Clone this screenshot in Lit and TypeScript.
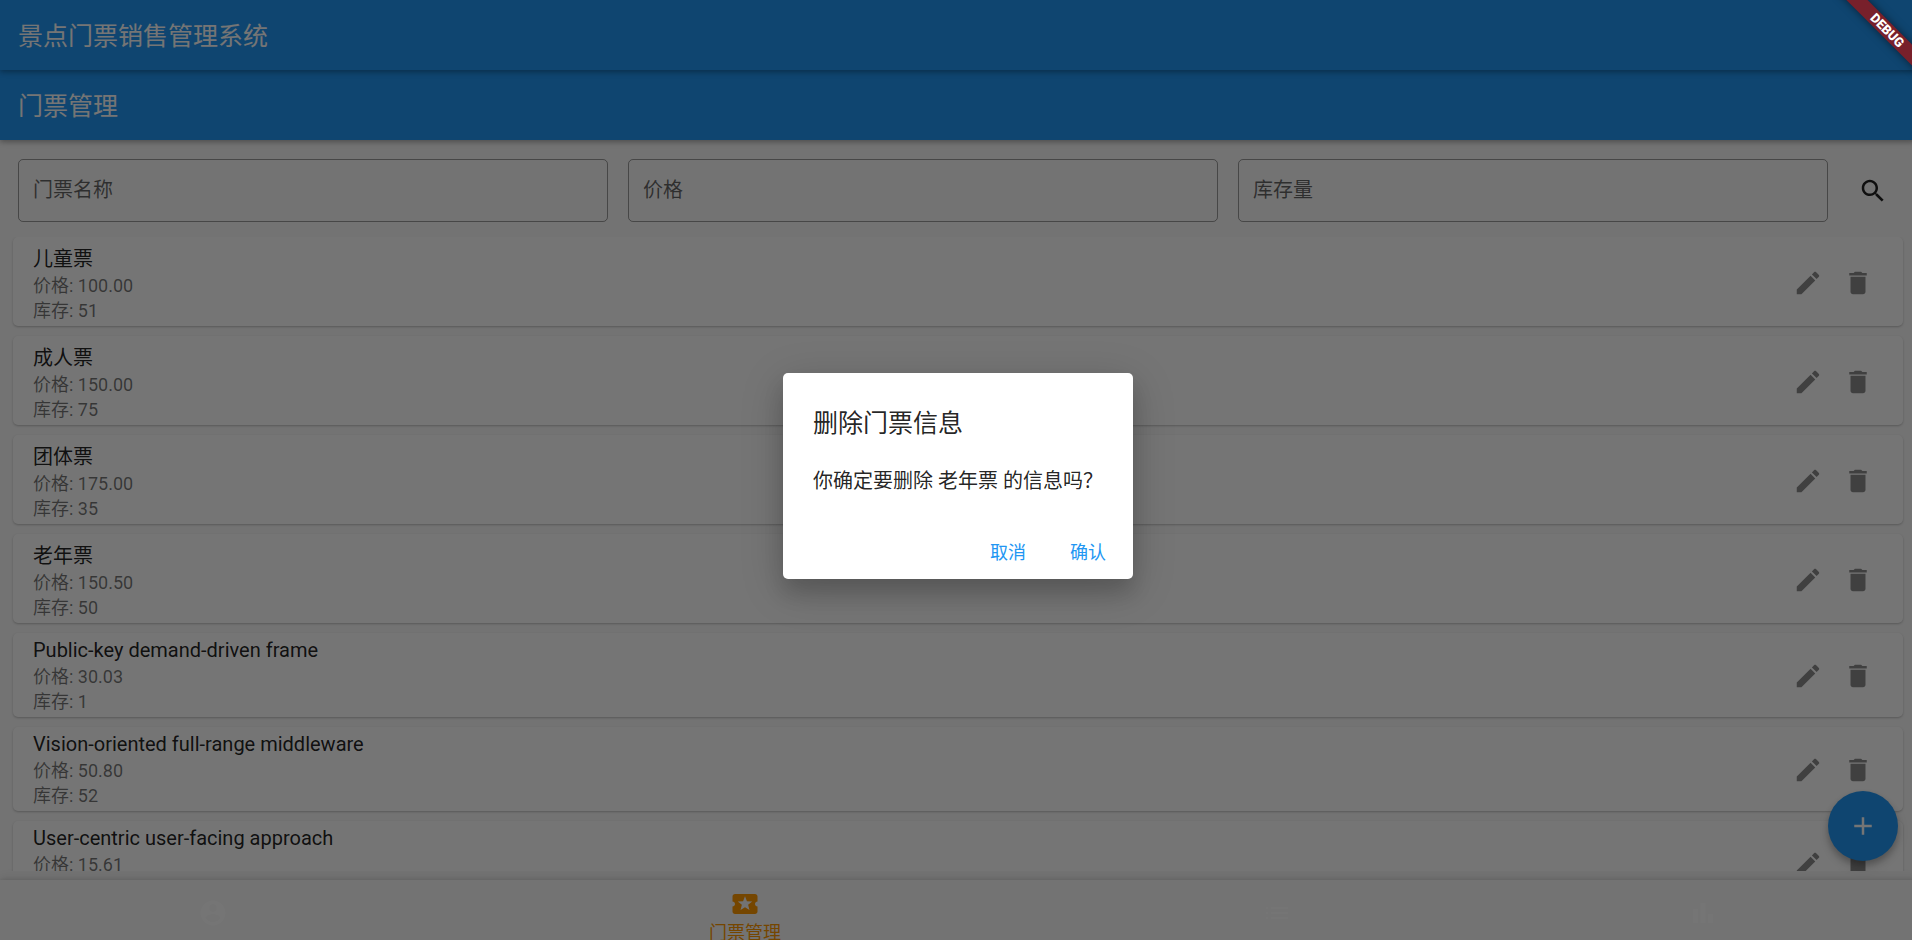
import { LitElement, html, css, svg } from "lit";
import { customElement, state } from "lit/decorators.js";

interface Ticket {
  name: string;
  price: string;
  stock: number;
}

const TICKETS: Ticket[] = [
  { name: "儿童票", price: "100.00", stock: 51 },
  { name: "成人票", price: "150.00", stock: 75 },
  { name: "团体票", price: "175.00", stock: 35 },
  { name: "老年票", price: "150.50", stock: 50 },
  { name: "Public-key demand-driven frame", price: "30.03", stock: 1 },
  { name: "Vision-oriented full-range middleware", price: "50.80", stock: 52 },
  { name: "User-centric user-facing approach", price: "15.61", stock: 24 },
];

const FILTERS = [
  { id: "name", label: "门票名称" },
  { id: "price", label: "价格" },
  { id: "stock", label: "库存量" },
];

const PATHS = {
  search:
    "M15.5 14h-.79l-.28-.27C15.41 12.59 16 11.11 16 9.5 16 5.91 13.09 3 9.5 3S3 5.91 3 9.5 5.91 16 9.5 16c1.61 0 3.09-.59 4.23-1.57l.27.28v.79l5 4.99L20.49 19l-4.99-5zm-6 0C7.01 14 5 11.99 5 9.5S7.01 5 9.5 5 14 7.01 14 9.5 11.99 14 9.5 14z",
  edit: "M3 17.25V21h3.75L17.81 9.94l-3.75-3.75L3 17.25zM20.71 7.04c.39-.39.39-1.02 0-1.41l-2.34-2.34c-.39-.39-1.02-.39-1.41 0l-1.83 1.83 3.75 3.75 1.83-1.83z",
  trash: "M6 19c0 1.1.9 2 2 2h8c1.1 0 2-.9 2-2V7H6v12zM19 4h-3.5l-1-1h-5l-1 1H5v2h14V4z",
  add: "M19 13h-6v6h-2v-6H5v-2h6V5h2v6h6v2z",
  account:
    "M12 2C6.48 2 2 6.48 2 12s4.48 10 10 10 10-4.48 10-10S17.52 2 12 2zm0 3c1.66 0 3 1.34 3 3s-1.34 3-3 3-3-1.34-3-3 1.34-3 3-3zm0 14.2c-2.5 0-4.71-1.28-6-3.22.03-1.99 4-3.08 6-3.08 1.99 0 5.97 1.09 6 3.08-1.29 1.94-3.5 3.22-6 3.22z",
  ticket:
    "M20 12c0-1.1.9-2 2-2V6c0-1.1-.9-2-2-2H4c-1.1 0-1.99.9-1.99 2v4c1.1 0 1.99.9 1.99 2s-.89 2-2 2v4c0 1.1.9 2 2 2h16c1.1 0 2-.9 2-2v-4c-1.1 0-2-.9-2-2zm-4.42 4.8L12 14.5l-3.58 2.3 1.08-4.12-3.29-2.69 4.24-.25L12 5.8l1.54 3.95 4.24.25-3.29 2.69 1.09 4.11z",
  list: "M3 13h2v-2H3v2zm0 4h2v-2H3v2zm0-8h2V7H3v2zm4 4h14v-2H7v2zm0 4h14v-2H7v2zM7 7v2h14V7H7z",
  chart: "M4 9h4v11H4zM10 4h4v16h-4zM16 13h4v7h-4z",
};

const icon = (name: keyof typeof PATHS) =>
  html`<svg class="icon" viewBox="0 0 24 24" aria-hidden="true">${svg`<path d=${PATHS[name]}></path>`}</svg>`;

const base = css`
  * {
    box-sizing: border-box;
  }
  button {
    border: 0;
    padding: 0;
    background: none;
    font: inherit;
    color: inherit;
    cursor: pointer;
  }
  .icon {
    display: block;
    width: 30px;
    height: 30px;
    fill: currentColor;
  }
`;

@customElement("ticket-card")
export class TicketCard extends LitElement {
  static properties = { ticket: { attribute: false } };
  declare ticket: Ticket;

  static styles = [
    base,
    css`
      :host {
        display: block;
      }
      .card {
        display: flex;
        align-items: center;
        padding: 5px 20px 3px;
        background: #fff;
        border-radius: 5px;
        box-shadow: 0 1px 2px rgba(0, 0, 0, 0.16), 0 1px 3px rgba(0, 0, 0, 0.08);
      }
      .body {
        flex: 1;
        min-width: 0;
      }
      .name {
        margin: 0;
        padding: 0 0 2px;
        font-size: 20px;
        font-weight: 400;
        line-height: 24px;
        color: rgba(0, 0, 0, 0.87);
      }
      .name:lang(zh) {
        padding: 3px 0 0;
        line-height: 28px;
      }
      .detail {
        margin: 0;
        font-size: 18px;
        line-height: 25px;
        color: rgba(0, 0, 0, 0.54);
      }
      .action {
        display: grid;
        place-items: center;
        width: 50px;
        height: 50px;
        color: rgba(0, 0, 0, 0.45);
      }
    `,
  ];

  render() {
    const { name, price, stock } = this.ticket;
    const lang = /[a-z]/i.test(name) ? "en" : "zh";
    return html`
      <article class="card">
        <div class="body">
          <h3 class="name" lang=${lang}>${name}</h3>
          <p class="detail">价格: ${price}</p>
          <p class="detail">库存: ${stock}</p>
        </div>
        <button class="action" aria-label="编辑">${icon("edit")}</button>
        <button class="action" aria-label="删除">${icon("trash")}</button>
      </article>
    `;
  }
}

@customElement("app-root")
export class AppRoot extends LitElement {
  @state() private dialogOpen = true;

  static styles = [
    base,
    css`
      :host {
        display: block;
        height: 100vh;
        overflow: hidden;
        font-family: Roboto, "Noto Sans CJK SC", sans-serif;
      }
      .shell {
        position: relative;
        display: flex;
        flex-direction: column;
        width: calc(100% + 4px);
        height: calc(100% + 12px);
        background: #fafafa;
      }
      .bar {
        position: relative;
        display: flex;
        align-items: center;
        flex: none;
        height: 70px;
        padding: 4px 18px 0;
        background: #2196f3;
        color: #fff;
        box-shadow: 0 2px 5px rgba(0, 0, 0, 0.24), 0 1px 8px rgba(0, 0, 0, 0.12);
      }
      .bar.top {
        z-index: 1;
      }
      .title {
        margin: 0;
        font-size: 25px;
        font-weight: 400;
        line-height: 36px;
      }
      .filters {
        display: flex;
        align-items: center;
        gap: 20px;
        flex: none;
        padding: 19px 13px 15px 18px;
      }
      .field {
        position: relative;
        flex: 1;
        display: flex;
      }
      .input {
        width: 100%;
        height: 63px;
        padding: 0 15px;
        border: 1px solid rgba(0, 0, 0, 0.38);
        border-radius: 5px;
        background: none;
        font: inherit;
        font-size: 20px;
        color: rgba(0, 0, 0, 0.87);
      }
      .label {
        position: absolute;
        inset: 0 15px;
        display: flex;
        align-items: center;
        padding-bottom: 4px;
        font-size: 20px;
        color: rgba(0, 0, 0, 0.6);
        pointer-events: none;
      }
      .input:not(:placeholder-shown) + .label {
        visibility: hidden;
      }
      .search {
        display: grid;
        place-items: center;
        width: 60px;
        height: 60px;
        margin-left: -5px;
        color: rgba(0, 0, 0, 0.87);
      }
      .list {
        flex: 1;
        min-height: 0;
        margin: 0 0 9px;
        padding: 0 13px;
        overflow: hidden;
        display: flex;
        flex-direction: column;
        gap: 10px;
      }
      .card {
        flex: none;
      }
      .nav {
        display: flex;
        flex: none;
        height: 72px;
        background: #fafafa;
        box-shadow: 0 -1px 10px rgba(0, 0, 0, 0.12), 0 0 4px rgba(0, 0, 0, 0.1);
      }
      .tab {
        flex: 2;
        display: flex;
        flex-direction: column;
        align-items: center;
        padding-top: 18px;
        color: #fff;
        text-decoration: none;
      }
      .tab.current {
        flex: 3;
        padding-top: 9px;
        color: #ff9800;
        font-size: 18px;
        line-height: 28px;
      }
      .fab {
        position: absolute;
        right: 18px;
        bottom: 91px;
        display: grid;
        place-items: center;
        width: 70px;
        height: 70px;
        border-radius: 50%;
        background: #2196f3;
        color: #fff;
        box-shadow: 0 4px 6px rgba(0, 0, 0, 0.2), 0 6px 12px rgba(0, 0, 0, 0.14);
      }
      .scrim {
        position: absolute;
        inset: 0;
        z-index: 2;
        display: grid;
        place-items: center;
        background: rgba(0, 0, 0, 0.54);
      }
      .dialog {
        width: 350px;
        border-radius: 5px;
        background: #fff;
        color: rgba(0, 0, 0, 0.87);
        box-shadow: 0 14px 20px rgba(0, 0, 0, 0.14), 0 10px 44px rgba(0, 0, 0, 0.18);
      }
      .heading {
        margin: 0;
        padding: 33px 30px 0;
        font-size: 25px;
        font-weight: 400;
        line-height: 36px;
      }
      .message {
        margin: 0;
        padding: 24px 30px 30px;
        font-size: 20px;
        line-height: 30px;
        white-space: nowrap;
      }
      .actions {
        display: flex;
        justify-content: flex-end;
        gap: 10px;
        padding: 0 10px 3px;
      }
      .choice {
        width: 70px;
        height: 50px;
        font-size: 18px;
        font-weight: 400;
        color: #2196f3;
      }
      .corner {
        position: absolute;
        top: 0;
        right: 4px;
        z-index: 3;
        width: 80px;
        height: 80px;
        overflow: hidden;
        pointer-events: none;
      }
      .ribbon {
        position: absolute;
        top: 20px;
        right: -35px;
        width: 125px;
        height: 15px;
        padding-left: 8px;
        transform: rotate(45deg);
        background: #78202b;
        box-shadow: 0 0 8px rgba(0, 0, 0, 0.5);
        color: #fff;
        font-size: 13px;
        font-weight: 900;
        line-height: 15px;
        text-align: center;
      }
    `,
  ];

  private close = () => {
    this.dialogOpen = false;
  };

  render() {
    return html`
      <div class="shell">
        <header class="bar top"><h1 class="title">景点门票销售管理系统</h1></header>
        <div class="bar"><h2 class="title">门票管理</h2></div>
        <form class="filters" @submit=${(e: Event) => e.preventDefault()}>
          ${FILTERS.map(
            (f) => html`<div class="field">
              <input class="input" id=${f.id} type="text" placeholder=" " />
              <label class="label" for=${f.id}>${f.label}</label>
            </div>`
          )}
          <button class="search" aria-label="搜索">${icon("search")}</button>
        </form>
        <main class="list">
          ${TICKETS.map((t) => html`<ticket-card class="card" .ticket=${t}></ticket-card>`)}
        </main>
        <nav class="nav">
          <a class="tab" href="#account" aria-label="用户">${icon("account")}</a>
          <a class="tab current" href="#tickets" aria-current="page">${icon("ticket")}<span>门票管理</span></a>
          <a class="tab" href="#orders" aria-label="订单">${icon("list")}</a>
          <a class="tab" href="#stats" aria-label="统计">${icon("chart")}</a>
        </nav>
        <button class="fab" aria-label="添加">${icon("add")}</button>
        ${this.dialogOpen
          ? html`<div class="scrim">
              <section class="dialog" role="alertdialog" aria-modal="true" aria-labelledby="dialog-title">
                <h2 class="heading" id="dialog-title">删除门票信息</h2>
                <p class="message">你确定要删除 老年票 的信息吗？</p>
                <div class="actions">
                  <button class="choice" @click=${this.close}>取消</button>
                  <button class="choice" @click=${this.close}>确认</button>
                </div>
              </section>
            </div>`
          : null}
        <div class="corner"><div class="ribbon">DEBUG</div></div>
      </div>
    `;
  }
}
